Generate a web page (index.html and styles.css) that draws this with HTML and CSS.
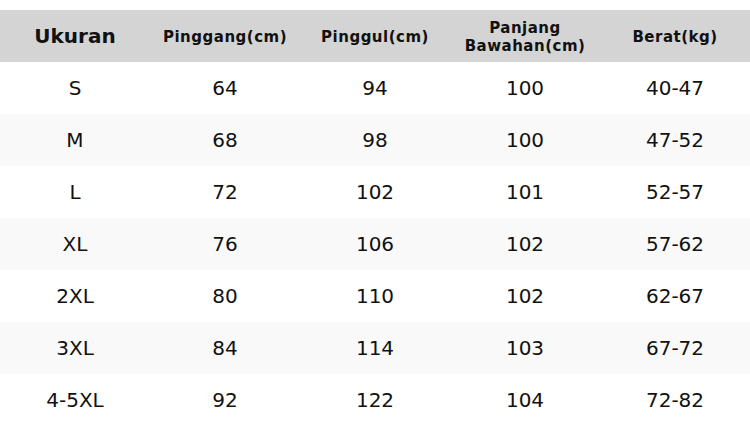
FILE: index.html
```html
<!DOCTYPE html>
<html>
<head>
<meta charset="utf-8">
<link rel="stylesheet" href="styles.css">
</head>
<body>
<div class="table">
  <div class="row head">
    <div class="cell main">Ukuran</div>
    <div class="cell">Pinggang(cm)</div>
    <div class="cell">Pinggul(cm)</div>
    <div class="cell">Panjang<br>Bawahan(cm)</div>
    <div class="cell">Berat(kg)</div>
  </div>
  <div class="row"><div class="cell">S</div><div class="cell">64</div><div class="cell">94</div><div class="cell">100</div><div class="cell">40-47</div></div>
  <div class="row alt"><div class="cell">M</div><div class="cell">68</div><div class="cell">98</div><div class="cell">100</div><div class="cell">47-52</div></div>
  <div class="row"><div class="cell">L</div><div class="cell">72</div><div class="cell">102</div><div class="cell">101</div><div class="cell">52-57</div></div>
  <div class="row alt"><div class="cell">XL</div><div class="cell">76</div><div class="cell">106</div><div class="cell">102</div><div class="cell">57-62</div></div>
  <div class="row"><div class="cell">2XL</div><div class="cell">80</div><div class="cell">110</div><div class="cell">102</div><div class="cell">62-67</div></div>
  <div class="row alt"><div class="cell">3XL</div><div class="cell">84</div><div class="cell">114</div><div class="cell">103</div><div class="cell">67-72</div></div>
  <div class="row"><div class="cell">4-5XL</div><div class="cell">92</div><div class="cell">122</div><div class="cell">104</div><div class="cell">72-82</div></div>
</div>
</body>
</html>
```
FILE: styles.css
```css
html, body {
  margin: 0;
  padding: 0;
  background: #ffffff;
}
body {
  font-family: "DejaVu Sans", sans-serif;
  color: #111111;
}
.table {
  padding-top: 10px;
  width: 750px;
}
.row {
  display: grid;
  grid-template-columns: repeat(5, 150px);
  height: 52px;
  background: #ffffff;
}
.row.alt {
  background: #f9f9f9;
}
.cell {
  display: flex;
  align-items: center;
  justify-content: center;
  text-align: center;
  font-size: 20px;
}
.head {
  background: #d4d4d4;
}
.head .cell {
  font-size: 15px;
  font-weight: bold;
  line-height: 18px;
  letter-spacing: 0.5px;
  padding-top: 1px;
}
.head .cell.main {
  font-size: 20px;
  letter-spacing: 0;
  padding-top: 0;
}
```
